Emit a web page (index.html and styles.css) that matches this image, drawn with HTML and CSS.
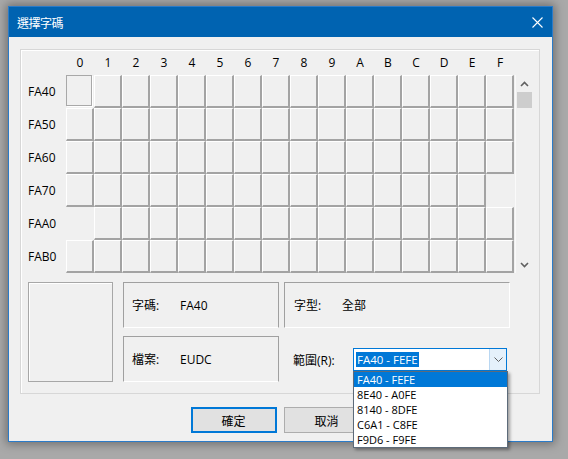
FILE: index.html
```html
<!DOCTYPE html>
<html lang="zh-Hant">
<head>
<meta charset="utf-8">
<title>選擇字碼</title>
<link rel="stylesheet" href="styles.css">
</head>
<body>
<div class="dialog">
  <div class="titlebar">
    <span class="title">選擇字碼</span>
    <svg class="close" width="11" height="11" viewBox="0 0 11 11"><path d="M0.5 0.5 L10.5 10.5 M10.5 0.5 L0.5 10.5" stroke="#fff" stroke-width="1.1" fill="none"/></svg>
  </div>
  <div class="client">
    <div class="frame">
      <div class="gridarea">
        <div class="grid">
          <div></div>
          <div class="colhead">0</div><div class="colhead">1</div><div class="colhead">2</div><div class="colhead">3</div>
          <div class="colhead">4</div><div class="colhead">5</div><div class="colhead">6</div><div class="colhead">7</div>
          <div class="colhead">8</div><div class="colhead">9</div><div class="colhead">A</div><div class="colhead">B</div>
          <div class="colhead">C</div><div class="colhead">D</div><div class="colhead">E</div><div class="colhead">F</div>

          <div class="rowhead">FA40</div>
          <div class="cell sel"></div><div class="cell"></div><div class="cell"></div><div class="cell"></div>
          <div class="cell"></div><div class="cell"></div><div class="cell"></div><div class="cell"></div>
          <div class="cell"></div><div class="cell"></div><div class="cell"></div><div class="cell"></div>
          <div class="cell"></div><div class="cell"></div><div class="cell"></div><div class="cell"></div>

          <div class="rowhead">FA50</div>
          <div class="cell"></div><div class="cell"></div><div class="cell"></div><div class="cell"></div>
          <div class="cell"></div><div class="cell"></div><div class="cell"></div><div class="cell"></div>
          <div class="cell"></div><div class="cell"></div><div class="cell"></div><div class="cell"></div>
          <div class="cell"></div><div class="cell"></div><div class="cell"></div><div class="cell"></div>

          <div class="rowhead">FA60</div>
          <div class="cell"></div><div class="cell"></div><div class="cell"></div><div class="cell"></div>
          <div class="cell"></div><div class="cell"></div><div class="cell"></div><div class="cell"></div>
          <div class="cell"></div><div class="cell"></div><div class="cell"></div><div class="cell"></div>
          <div class="cell"></div><div class="cell"></div><div class="cell"></div><div class="cell"></div>

          <div class="rowhead">FA70</div>
          <div class="cell"></div><div class="cell"></div><div class="cell"></div><div class="cell"></div>
          <div class="cell"></div><div class="cell"></div><div class="cell"></div><div class="cell"></div>
          <div class="cell"></div><div class="cell"></div><div class="cell"></div><div class="cell"></div>
          <div class="cell"></div><div class="cell"></div><div class="cell"></div><div class="empty"></div>

          <div class="rowhead">FAA0</div>
          <div class="empty"></div><div class="cell"></div><div class="cell"></div><div class="cell"></div>
          <div class="cell"></div><div class="cell"></div><div class="cell"></div><div class="cell"></div>
          <div class="cell"></div><div class="cell"></div><div class="cell"></div><div class="cell"></div>
          <div class="cell"></div><div class="cell"></div><div class="cell"></div><div class="cell"></div>

          <div class="rowhead">FAB0</div>
          <div class="cell"></div><div class="cell"></div><div class="cell"></div><div class="cell"></div>
          <div class="cell"></div><div class="cell"></div><div class="cell"></div><div class="cell"></div>
          <div class="cell"></div><div class="cell"></div><div class="cell"></div><div class="cell"></div>
          <div class="cell"></div><div class="cell"></div><div class="cell"></div><div class="cell"></div>
        </div>
        <div class="scrollbar">
          <div class="arrow"><svg width="9" height="6" viewBox="0 0 9 6"><path d="M1 5 L4.5 1.5 L8 5" stroke="#606060" stroke-width="1.6" fill="none"/></svg></div>
          <div class="thumb"></div>
          <div class="track"></div>
          <div class="arrow"><svg width="9" height="6" viewBox="0 0 9 6"><path d="M1 1 L4.5 4.5 L8 1" stroke="#606060" stroke-width="1.6" fill="none"/></svg></div>
        </div>
      </div>
      <div class="info">
        <div class="preview"></div>
        <div class="col-mid">
          <div class="box box-mid"><span class="lbl">字碼:</span><span>FA40</span></div>
          <div class="box box-mid"><span class="lbl">檔案:</span><span>EUDC</span></div>
        </div>
        <div class="col-right">
          <div class="box box-right"><span class="lbl">字型:</span><span>全部</span></div>
          <div class="range">
            <span class="range-lbl">範圍(R):</span>
            <div class="combo">
              <span class="val">FA40 - FEFE</span>
              <div class="drop"><svg width="9" height="5" viewBox="0 0 9 5"><path d="M0.5 0.5 L4.5 4.5 L8.5 0.5" stroke="#606060" stroke-width="1" fill="none"/></svg></div>
              <div class="list">
                <div class="item sel">FA40 - FEFE</div>
                <div class="item">8E40 - A0FE</div>
                <div class="item">8140 - 8DFE</div>
                <div class="item">C6A1 - C8FE</div>
                <div class="item">F9D6 - F9FE</div>
              </div>
            </div>
          </div>
        </div>
      </div>
    </div>
    <div class="buttons">
      <div class="button ok">確定</div>
      <div class="button">取消</div>
    </div>
  </div>
</div>
</body>
</html>
```
FILE: styles.css
```css
* { box-sizing: border-box; }

html, body {
  width: 568px;
  height: 459px;
  overflow: hidden;
}

body {
  margin: 0;
  padding: 6px 0 0 8px;
  background: #a9a9a9;
  font-family: "Open Sans", "Noto Sans CJK TC", sans-serif;
  font-size: 12px;
  color: #000;
}

.dialog {
  width: 545px;
  height: 436px;
  border: 1px solid #2b7bc8;
  background: #f0f0f0;
  box-shadow: 0 0 9px 2px rgba(0, 0, 0, 0.35);
  display: flex;
  flex-direction: column;
}

.titlebar {
  height: 30px;
  flex: none;
  background: #0063b1;
  color: #fff;
  display: flex;
  align-items: center;
  justify-content: space-between;
  padding: 0 9px 0 8px;
}

.title {
  font-family: "Noto Sans CJK TC", sans-serif;
  font-size: 12px;
  letter-spacing: -0.5px;
}

.close { display: block; }

.client {
  flex: 1;
  padding: 12px 12px 0 11px;
  display: flex;
  flex-direction: column;
}

.frame {
  height: 345px;
  border: 1px solid #d7d7d7;
  box-shadow: inset 1px 1px 0 #fff;
}

.gridarea {
  display: flex;
}

.grid {
  display: grid;
  grid-template-columns: 45px repeat(16, 28px);
  grid-template-rows: 25px repeat(6, 33px);
}

.colhead {
  text-align: center;
  line-height: 25px;
}

.rowhead {
  display: flex;
  align-items: center;
  padding-left: 7px;
}

.cell {
  border-style: solid;
  border-width: 1px 2px 2px 1px;
  border-color: #fff #a3a3a3 #a3a3a3 #fff;
}

.cell.sel {
  border: 1px solid #a8a8a8;
  margin: 0 2px 2px 0;
  box-shadow: 1px 1px 0 #fff;
}

.scrollbar {
  width: 17px;
  margin-left: 1px;
  margin-top: 25px;
  height: 198px;
  display: flex;
  flex-direction: column;
  align-items: center;
  border-left: 1px solid #fafafa;
}

.arrow {
  height: 17px;
  width: 17px;
  display: flex;
  align-items: center;
  justify-content: center;
}

.arrow svg { display: block; }

.thumb {
  width: 15px;
  height: 16px;
  background: #cdcdcd;
}

.track { flex: 1; }

.info {
  display: flex;
  margin-top: 9px;
  padding-left: 7px;
}

.preview {
  width: 85px;
  height: 100px;
  border: 1px solid #a7a7a7;
  box-shadow: inset 1px 1px 0 #fff;
}

.col-mid {
  margin-left: 10px;
  width: 156px;
  display: flex;
  flex-direction: column;
  gap: 8px;
}

.col-right {
  margin-left: 5px;
  width: 226px;
}

.box {
  height: 46px;
  display: flex;
  align-items: center;
  border: 1px solid;
}

.box-mid {
  border-color: #a0a0a0 #a0a0a0 #fff #a0a0a0;
  padding-left: 8px;
}

.box-right {
  border-color: #a0a0a0 #fff #fff #a0a0a0;
  padding-left: 9px;
}

.lbl {
  width: 48px;
  flex: none;
}

.range {
  display: flex;
  align-items: center;
  margin-top: 20px;
  padding-left: 9px;
}

.range-lbl {
  width: 60px;
  flex: none;
}

.combo {
  position: relative;
  width: 154px;
  height: 23px;
  border: 1px solid #0078d7;
  background: #fff;
  display: flex;
  align-items: center;
}

.val {
  margin-left: 2px;
  padding: 0 1px;
  background: #0078d7;
  color: #fff;
  font-size: 11.5px;
  line-height: 15px;
}

.drop {
  margin-left: auto;
  width: 17px;
  height: 100%;
  background: #e5f1fb;
  border-left: 1px solid #b9d7f2;
  display: flex;
  align-items: center;
  justify-content: center;
}

.drop svg { display: block; }

.list {
  position: absolute;
  left: -1px;
  top: 22px;
  width: 155px;
  border: 1px solid #5d6b7a;
  background: #fff;
  box-shadow: 2px 2px 3px rgba(0, 0, 0, 0.35);
  z-index: 2;
}

.item {
  height: 15px;
  line-height: 15px;
  font-size: 11px;
  padding-left: 3px;
  white-space: nowrap;
  overflow: hidden;
}

.item.sel {
  background: #0078d7;
  color: #fff;
}

.buttons {
  display: flex;
  justify-content: center;
  gap: 7px;
  margin-top: 13px;
}

.button {
  width: 86px;
  height: 26px;
  background: #e1e1e1;
  border: 1px solid #adadad;
  display: flex;
  align-items: center;
  justify-content: center;
  font-family: "Noto Sans CJK TC", sans-serif;
  font-size: 12px;
}

.button.ok {
  border: 2px solid #0078d7;
}
```
